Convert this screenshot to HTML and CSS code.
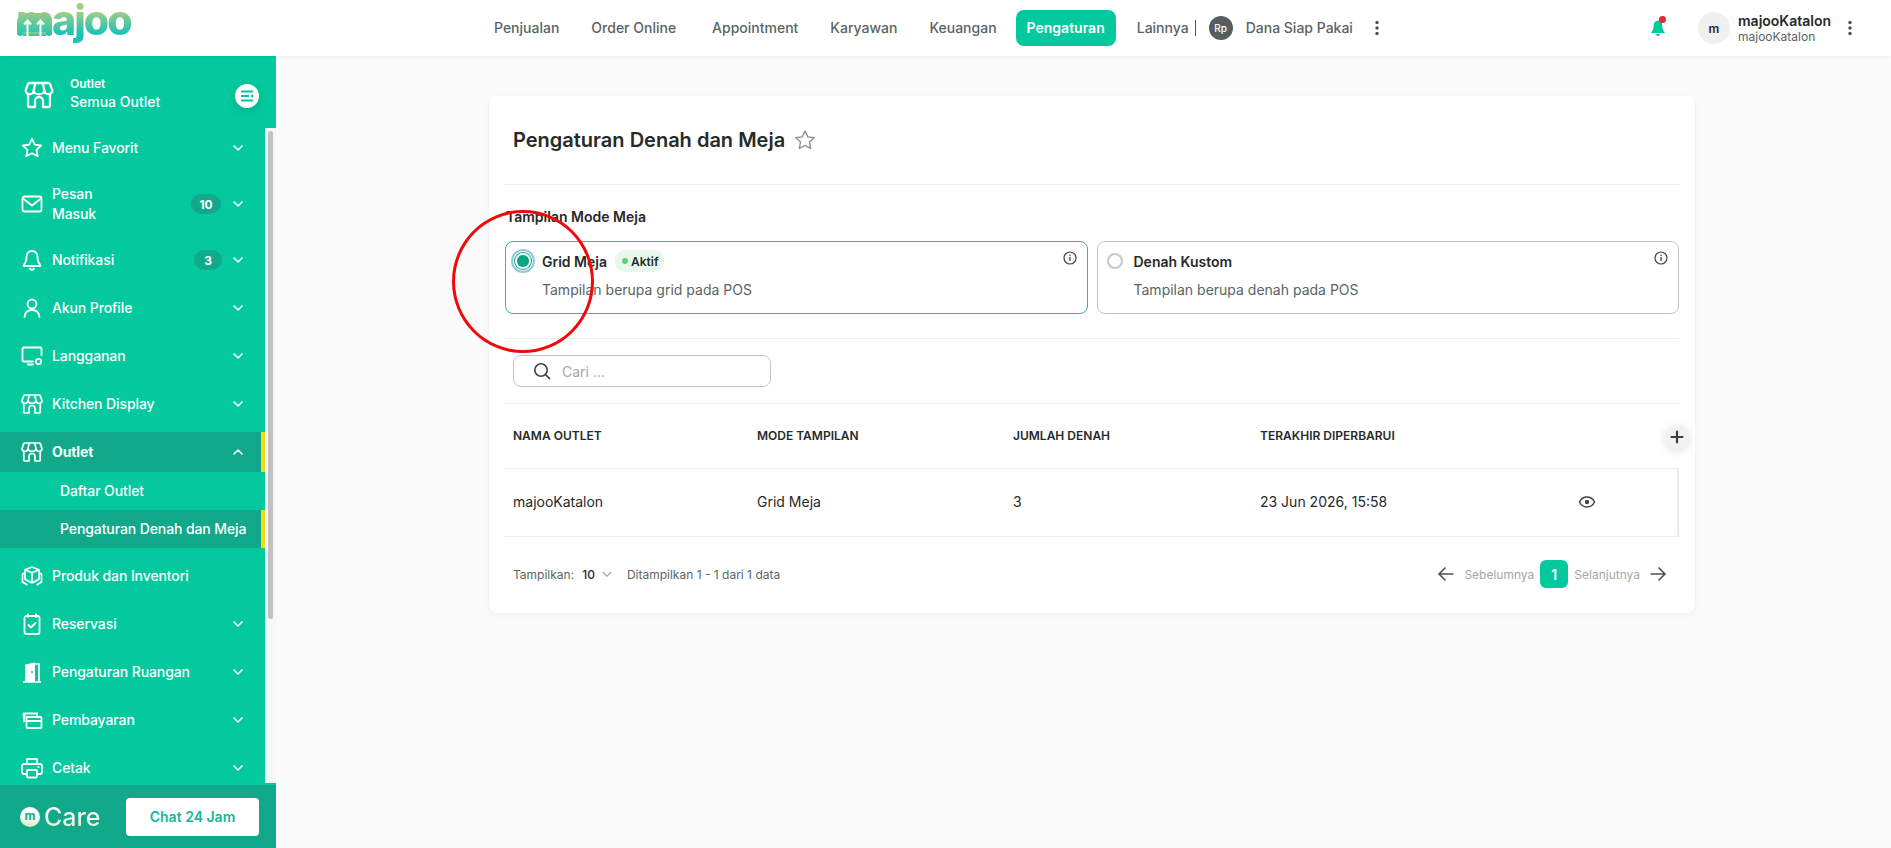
FILE: index.html
```html
<!DOCTYPE html>
<html lang="en">
<head>
    <meta charset="UTF-8">
    <meta name="viewport" content="width=device-width, initial-scale=1.0">
    <title>Pengaturan Denah dan Meja</title>
    <link rel="stylesheet" href="styles.css">
</head>
<body>
    <svg class="sprite" xmlns="http://www.w3.org/2000/svg">
        <symbol id="chev" viewBox="0 0 16 16"><path d="M4 6l4 4 4-4" fill="none" stroke="currentColor" stroke-width="1.6" stroke-linecap="round" stroke-linejoin="round"/></symbol>
        <symbol id="store" viewBox="0 0 24 24"><g fill="none" stroke="currentColor" stroke-width="1.7" stroke-linejoin="round" stroke-linecap="round"><path d="M5 3h14a1.4 1.4 0 0 1 1.3.9L22 8.6c0 1.6-1.3 2.7-2.9 2.7s-3-1.1-3.1-2.7c-.1 1.6-1.8 2.7-4 2.7s-3.900-1.100-4-2.700c-.1 1.600-1.500 2.700-3.100 2.700S2 10.200 2 8.600l1.700-4.700A1.400 1.400 0 0 1 5 3z"/><path d="M9.200 3.200L8 8.600M14.800 3.200L16 8.600"/><path d="M3.800 11.300V20a1 1 0 0 0 1 1H9v-4.500a3 3 0 0 1 6 0V21h4.200a1 1 0 0 0 1-1v-8.700"/></g></symbol>
        <symbol id="kebab" viewBox="0 0 16 16"><circle cx="8" cy="2.500" r="1.700" fill="currentColor"/><circle cx="8" cy="8" r="1.700" fill="currentColor"/><circle cx="8" cy="13.500" r="1.700" fill="currentColor"/></symbol>
        <symbol id="info" viewBox="0 0 16 16"><circle cx="8" cy="8" r="6" fill="none" stroke="currentColor" stroke-width="1.200"/><path d="M8 7.500v3" stroke="currentColor" stroke-width="1.300" stroke-linecap="round"/><circle cx="8" cy="5.300" r=".8" fill="currentColor"/></symbol>
    </svg>

    <header class="topbar">
        <div class="logo">
            <span class="logo-text">majoo</span>
            <svg class="logo-plate" viewBox="0 0 36 24" width="36" height="24">
                <defs><linearGradient id="plate" x1="0" y1="0" x2="0" y2="1"><stop offset="0" stop-color="#98cb88"/><stop offset="1" stop-color="#1fc4b4"/></linearGradient></defs>
                <path d="M1 21V10a9 9 0 0 1 9-9h17a9 9 0 0 1 9 9v11a3 3 0 0 1-6 0v-1H7v1a3 3 0 0 1-6 0z" fill="url(#plate)"/>
                <path d="M7 20h23v4H7z" fill="url(#plate)"/>
                <path d="M11.500 24V9M8 12.500l3.500-4 3.500 4M24.500 24V9M21 12.500l3.500-4 3.500 4" fill="none" stroke="#fff" stroke-width="2"/>
            </svg>
        </div>
        <nav class="topnav">
            <a class="topnav-item">Penjualan</a>
            <a class="topnav-item topnav-wide">Order Online</a>
            <a class="topnav-item">Appointment</a>
            <a class="topnav-item">Karyawan</a>
            <a class="topnav-item">Keuangan</a>
            <a class="topnav-item topnav-active">Pengaturan</a>
            <a class="topnav-item topnav-more">Lainnya</a>
            <span class="topnav-sep"></span>
            <span class="rp-badge">Rp</span>
            <a class="topnav-item topnav-dana">Dana Siap Pakai</a>
            <svg class="kebab" width="16" height="16"><use href="#kebab"/></svg>
        </nav>
        <div class="topbar-right">
            <span class="bell">
                <svg width="16" height="18" viewBox="0 0 16 18"><path d="M8 1.500c-2.800 0-4.300 2.200-4.300 4.800 0 3.400-.8 5.400-2.400 6.900-.3.300-.1.800.3.800h12.800c.4 0 .6-.5.300-.8-1.600-1.500-2.400-3.500-2.400-6.900C12.300 3.700 10.800 1.500 8 1.500zM6 15h4a2 2 0 0 1-4 0z" fill="#04c99e"/></svg>
                <i class="bell-dot"></i>
            </span>
            <span class="avatar">m</span>
            <div class="user">
                <div class="user-name">majooKatalon</div>
                <div class="user-sub">majooKatalon</div>
            </div>
            <svg class="kebab" width="16" height="16"><use href="#kebab"/></svg>
        </div>
    </header>

    <div class="layout">
        <aside class="sidebar">
            <div class="outlet-head">
                <svg class="outlet-icon" width="32" height="32"><use href="#store"/></svg>
                <div class="outlet-text">
                    <div class="outlet-label">Outlet</div>
                    <div class="outlet-name">Semua Outlet</div>
                </div>
                <span class="outlet-btn">
                    <svg width="16" height="16" viewBox="0 0 16 16"><path d="M2 3.500h12M2 8h8M2 12.500h12" stroke="#04c99e" stroke-width="2" fill="none"/><path d="M14 6v4l-2.500-2z" fill="#04c99e"/></svg>
                </span>
            </div>

            <div class="menu-wrap">
                <ul class="menu">
                    <li class="menu-item">
                        <svg class="menu-icon" viewBox="0 0 24 24"><path d="M12 2.800l2.800 5.900 6.400.8-4.700 4.400 1.200 6.400-5.700-3.100-5.700 3.100 1.200-6.400-4.700-4.400 6.400-.8z" fill="none" stroke="currentColor" stroke-width="1.800" stroke-linejoin="round"/></svg>
                        <span class="menu-label">Menu Favorit</span>
                        <svg class="menu-chev"><use href="#chev"/></svg>
                    </li>
                    <li class="menu-item menu-tall">
                        <svg class="menu-icon" viewBox="0 0 24 24"><rect x="2.500" y="4.500" width="19" height="15" rx="2" fill="none" stroke="currentColor" stroke-width="1.800"/><path d="M3 6.500l9 7 9-7" fill="none" stroke="currentColor" stroke-width="1.800"/></svg>
                        <span class="menu-label">Pesan<br>Masuk</span>
                        <span class="menu-badge">10</span>
                        <svg class="menu-chev"><use href="#chev"/></svg>
                    </li>
                    <li class="menu-item">
                        <svg class="menu-icon" viewBox="0 0 24 24"><path d="M12 3c-3.600 0-5.500 2.700-5.500 6 0 4-1 6.300-2.800 8.200-.3.300-.1.800.3.800h16c.4 0 .6-.5.300-.8C18.500 15.300 17.500 13 17.500 9c0-3.300-1.900-6-5.500-6zM10 20.500c.4.900 1.100 1.300 2 1.300s1.600-.4 2-1.300" fill="none" stroke="currentColor" stroke-width="1.800" stroke-linejoin="round" stroke-linecap="round"/></svg>
                        <span class="menu-label">Notifikasi</span>
                        <span class="menu-badge menu-badge-small">3</span>
                        <svg class="menu-chev"><use href="#chev"/></svg>
                    </li>
                    <li class="menu-item">
                        <svg class="menu-icon" viewBox="0 0 24 24"><circle cx="12" cy="8" r="4.500" fill="none" stroke="currentColor" stroke-width="1.800"/><path d="M4.500 21c.4-4.500 3.400-7 7.500-7s7.100 2.500 7.500 7" fill="none" stroke="currentColor" stroke-width="1.800" stroke-linecap="round"/></svg>
                        <span class="menu-label">Akun Profile</span>
                        <svg class="menu-chev"><use href="#chev"/></svg>
                    </li>
                    <li class="menu-item">
                        <svg class="menu-icon" viewBox="0 0 24 24"><path d="M13 17.500H4a1.500 1.500 0 0 1-1.500-1.500V5A1.500 1.500 0 0 1 4 3.500h16A1.500 1.500 0 0 1 21.500 5v6M8 20.500h5" fill="none" stroke="currentColor" stroke-width="1.800" stroke-linecap="round"/><circle cx="18.500" cy="17.500" r="2.600" fill="none" stroke="currentColor" stroke-width="1.800"/></svg>
                        <span class="menu-label">Langganan</span>
                        <svg class="menu-chev"><use href="#chev"/></svg>
                    </li>
                    <li class="menu-item">
                        <svg class="menu-icon"><use href="#store"/></svg>
                        <span class="menu-label">Kitchen Display</span>
                        <svg class="menu-chev"><use href="#chev"/></svg>
                    </li>
                    <li class="menu-item menu-current">
                        <svg class="menu-icon"><use href="#store"/></svg>
                        <span class="menu-label menu-label-bold">Outlet</span>
                        <svg class="menu-chev menu-chev-up"><use href="#chev"/></svg>
                    </li>
                    <li class="menu-sub">Daftar Outlet</li>
                    <li class="menu-sub menu-current">Pengaturan Denah dan Meja</li>
                    <li class="menu-item menu-after-sub">
                        <svg class="menu-icon" viewBox="0 0 24 24"><g fill="none" stroke="currentColor" stroke-width="1.700" stroke-linejoin="round"><path d="M12 3l7 2.800v9.400L12 19l-7-3.800V5.800z"/><path d="M5 5.800l7 3 7-3M12 8.800V19"/><path d="M5 9l-2.500 1v8l5 3M19 9l2.500 1v8l-5 3"/></g></svg>
                        <span class="menu-label">Produk dan Inventori</span>
                    </li>
                    <li class="menu-item">
                        <svg class="menu-icon" viewBox="0 0 24 24"><rect x="4.500" y="4" width="15" height="18" rx="2" fill="none" stroke="currentColor" stroke-width="1.800"/><path d="M8 2.500V5M16 2.500V5M8.500 13l2.500 2.500 4.500-4.500" fill="none" stroke="currentColor" stroke-width="1.800" stroke-linecap="round" stroke-linejoin="round"/></svg>
                        <span class="menu-label">Reservasi</span>
                        <svg class="menu-chev"><use href="#chev"/></svg>
                    </li>
                    <li class="menu-item">
                        <svg class="menu-icon" viewBox="0 0 24 24"><path d="M5 22V4.500L15 2.500V22z" fill="currentColor"/><path d="M15 4h4v17.500M3 22h18" fill="none" stroke="currentColor" stroke-width="1.700"/><circle cx="12" cy="12" r="1" fill="#04c99e"/></svg>
                        <span class="menu-label">Pengaturan Ruangan</span>
                        <svg class="menu-chev"><use href="#chev"/></svg>
                    </li>
                    <li class="menu-item">
                        <svg class="menu-icon" viewBox="0 0 24 24"><g fill="none" stroke="currentColor" stroke-width="1.800"><rect x="6.500" y="9" width="15" height="11" rx="1"/><path d="M6.500 13h15M4 14V5.500h13V9"/><path d="M2.500 5.500h3v5h-2.500z" fill="currentColor" stroke="none"/></g></svg>
                        <span class="menu-label">Pembayaran</span>
                        <svg class="menu-chev"><use href="#chev"/></svg>
                    </li>
                    <li class="menu-item">
                        <svg class="menu-icon" viewBox="0 0 24 24"><g fill="none" stroke="currentColor" stroke-width="1.800" stroke-linejoin="round"><path d="M7 8V3h10v5"/><path d="M7 18H4a2 2 0 0 1-2-2v-6a2 2 0 0 1 2-2h16a2 2 0 0 1 2 2v6a2 2 0 0 1-2 2h-3"/><rect x="7" y="14" width="10" height="7.500" rx="1"/></g><circle cx="18.500" cy="11" r="1" fill="currentColor"/></svg>
                        <span class="menu-label">Cetak</span>
                        <svg class="menu-chev"><use href="#chev"/></svg>
                    </li>
                </ul>
                <div class="scrollbar"><div class="scrollbar-thumb"></div></div>
            </div>

            <div class="care">
                <div class="care-logo">
                    <span class="care-mark">m</span>
                    <span class="care-text">Care</span>
                </div>
                <button class="care-btn">Chat 24 Jam</button>
            </div>
        </aside>

        <main class="content">
            <section class="card">
                <div class="card-head">
                    <h1 class="card-title">Pengaturan Denah dan Meja</h1>
                    <svg class="title-star" width="24" height="24" viewBox="0 0 24 24"><path d="M12 3l2.800 5.900 6.400.8-4.700 4.400 1.200 6.400-5.700-3.100-5.700 3.100 1.200-6.400-4.700-4.400 6.400-.8z" fill="none" stroke="#8b9291" stroke-width="1.400" stroke-linejoin="round"/></svg>
                </div>

                <div class="mode-label">Tampilan Mode Meja</div>
                <div class="mode-row">
                    <div class="mode-card mode-card-on">
                        <span class="radio radio-on"></span>
                        <div class="mode-body">
                            <div class="mode-title">Grid Meja <span class="tag"><i class="tag-dot"></i>Aktif</span></div>
                            <div class="mode-desc">Tampilan berupa grid pada POS</div>
                        </div>
                        <svg class="mode-info" width="16" height="16"><use href="#info"/></svg>
                    </div>
                    <div class="mode-card">
                        <span class="radio"></span>
                        <div class="mode-body">
                            <div class="mode-title">Denah Kustom</div>
                            <div class="mode-desc">Tampilan berupa denah pada POS</div>
                        </div>
                        <svg class="mode-info" width="16" height="16"><use href="#info"/></svg>
                    </div>
                </div>

                <div class="search-row">
                    <div class="search">
                        <svg width="20" height="20" viewBox="0 0 20 20"><circle cx="9" cy="9" r="6.200" fill="none" stroke="#3f4746" stroke-width="1.600"/><path d="M13.600 13.600l4 4" stroke="#3f4746" stroke-width="1.600" stroke-linecap="round"/></svg>
                        <span class="search-text">Cari ...</span>
                    </div>
                </div>

                <table class="table">
                    <thead>
                        <tr>
                            <th class="col-name">NAMA OUTLET</th>
                            <th class="col-mode">MODE TAMPILAN</th>
                            <th class="col-count">JUMLAH DENAH</th>
                            <th class="col-date">TERAKHIR DIPERBARUI</th>
                            <th class="col-action">
                                <span class="add-btn">
                                    <svg width="14" height="14" viewBox="0 0 14 14"><path d="M7 1.500v11M1.500 7h11" stroke="#3a4140" stroke-width="2.200" stroke-linecap="round"/></svg>
                                </span>
                            </th>
                        </tr>
                    </thead>
                    <tbody>
                        <tr>
                            <td>majooKatalon</td>
                            <td>Grid Meja</td>
                            <td>3</td>
                            <td>23 Jun 2026, 15:58</td>
                            <td class="cell-action">
                                <svg width="18" height="18" viewBox="0 0 18 18"><path d="M1.500 9C3 5.800 5.700 4 9 4s6 1.800 7.500 5c-1.500 3.200-4.200 5-7.500 5S3 12.200 1.500 9z" fill="none" stroke="#3f4746" stroke-width="1.500"/><circle cx="9" cy="9" r="2.200" fill="#3f4746"/></svg>
                            </td>
                        </tr>
                    </tbody>
                </table>

                <div class="table-foot">
                    <span class="foot-text">Tampilkan:</span>
                    <span class="foot-size">10</span>
                    <svg class="foot-chev" width="14" height="14" viewBox="0 0 16 16"><path d="M3 5.500l5 5 5-5" fill="none" stroke="#9aa1a0" stroke-width="1.300"/></svg>
                    <span class="foot-text">Ditampilkan 1 - 1 dari 1 data</span>
                    <div class="pager">
                        <svg class="pager-arrow pager-prev" width="18" height="18" viewBox="0 0 18 18"><path d="M16.500 9H2M8.500 2.500L2 9l6.500 6.500" fill="none" stroke="#4a5150" stroke-width="1.500"/></svg>
                        <span class="pager-text">Sebelumnya</span>
                        <span class="pager-num">1</span>
                        <span class="pager-text">Selanjutnya</span>
                        <svg class="pager-arrow pager-next" width="18" height="18" viewBox="0 0 18 18"><path d="M1.500 9H16M9.500 2.500L16 9l-6.500 6.500" fill="none" stroke="#4a5150" stroke-width="1.500"/></svg>
                    </div>
                </div>
            </section>
        </main>
    </div>

    <div class="annotation"></div>
</body>
</html>
```

FILE: styles.css
```css
:root {
    --green: #04c99e;
    --green-dark: #12a98a;
    --yellow: #f7dc11;
    --text: #272a2a;
    --text-soft: #5b6463;
    --line: #eeeeee;
}

* {
    box-sizing: border-box;
}

html, body {
    height: 100%;
}

body {
    margin: 0;
    font-family: Inter, "Noto Sans", sans-serif;
    font-size: 14px;
    color: var(--text);
    background-color: #fafafa;
    display: flex;
    flex-direction: column;
    height: 100vh;
    overflow: hidden;
}

.sprite {
    display: none;
}

/* top bar */
.topbar {
    flex: 0 0 56px;
    display: flex;
    align-items: center;
    background: #fff;
    box-shadow: 0 1px 4px rgba(0, 0, 0, 0.06);
    position: relative;
    z-index: 2;
}

.logo {
    width: 276px;
    height: 56px;
    padding-left: 16px;
    position: relative;
}

.logo-text {
    display: inline-block;
    font-size: 41px;
    font-weight: 800;
    line-height: 40px;
    padding-bottom: 8px;
    letter-spacing: -2px;
    background: linear-gradient(180deg, #a2cc84 25%, #18c4b8 70%);
    -webkit-background-clip: text;
    background-clip: text;
    color: transparent;
}

/* solid m with the two arrows cut out of it */
.logo-plate {
    position: absolute;
    left: 16px;
    top: 12px;
}

.topnav {
    display: flex;
    align-items: center;
    margin-left: 202px;
    color: var(--text-soft);
    font-weight: 500;
}

.topnav-item {
    padding: 0 16px;
    line-height: 36px;
    white-space: nowrap;
}

.topnav-wide {
    padding-right: 20px;
}

.topnav-active {
    background: var(--green);
    color: #fff;
    font-weight: 600;
    border-radius: 8px;
    padding: 0 11px;
    margin: 0 5px 0 3px;
}

.topnav-more {
    padding-right: 0;
}

.topnav-sep {
    width: 1px;
    height: 16px;
    background: #555;
    margin: 0 13px 0 6px;
}

.rp-badge {
    width: 24px;
    height: 24px;
    border-radius: 50%;
    background: #565e5d;
    color: #fff;
    font-size: 10px;
    display: flex;
    align-items: center;
    justify-content: center;
}

.topnav-dana {
    padding: 0 16px 0 13px;
}

.kebab {
    color: #4a5150;
    flex: none;
}

.topbar-right {
    margin-left: auto;
    display: flex;
    align-items: center;
    padding-right: 33px;
}

.bell {
    position: relative;
    display: flex;
    margin-right: 32px;
}

.bell-dot {
    position: absolute;
    top: -3px;
    right: 0;
    width: 7px;
    height: 7px;
    border-radius: 50%;
    background: #e8263c;
}

.avatar {
    width: 32px;
    height: 32px;
    border-radius: 50%;
    background: #f0f0f0;
    font-size: 12px;
    font-weight: 600;
    display: flex;
    align-items: center;
    justify-content: center;
    margin-right: 8px;
}

.user {
    margin-right: 8px;
    width: 96px;
}

.user-name {
    font-weight: 600;
    line-height: 17px;
    white-space: nowrap;
}

.user-sub {
    font-size: 12px;
    line-height: 16px;
    color: var(--text-soft);
}

/* sidebar */
.layout {
    flex: 1;
    display: flex;
    min-height: 0;
}

.sidebar {
    flex: 0 0 276px;
    min-width: 0;
    background: var(--green);
    color: #fff;
    display: flex;
    flex-direction: column;
    min-height: 0;
}

.outlet-head {
    flex: 0 0 72px;
    display: flex;
    align-items: center;
    padding: 6px 17px 0 23px;
}

.outlet-text {
    margin-left: 15px;
    flex: 1;
    margin-top: -2px;
}

.outlet-label {
    font-size: 12px;
    font-weight: 600;
    line-height: 16px;
}

.outlet-name {
    font-weight: 500;
    line-height: 20px;
}

.outlet-btn {
    width: 24px;
    height: 24px;
    border-radius: 50%;
    background: #fff;
    box-shadow: 0 3px 8px rgba(0, 0, 0, 0.15);
    display: flex;
    align-items: center;
    justify-content: center;
    margin-top: 1px;
}

.menu-wrap {
    flex: 1;
    min-height: 0;
    margin-bottom: 2px;
    display: flex;
}

.menu {
    flex: 1;
    min-width: 0;
    list-style: none;
    margin: 0;
    padding: 0;
    overflow: hidden;
    font-weight: 500;
    letter-spacing: -0.1px;
}

/* scrollbars are hidden in some browsers, so this one is plain divs */
.scrollbar {
    flex: 0 0 11px;
    background: #f7f7f7;
}

.scrollbar-thumb {
    height: 488px;
    margin: 3px 3px 0;
    border-radius: 3px;
    background: #c1c1c1;
}

.menu-item {
    height: 40px;
    margin-bottom: 8px;
    padding: 0 19px 0 20px;
    display: flex;
    align-items: center;
}

.menu-tall {
    height: 56px;
}

.menu-icon {
    flex: none;
    width: 24px;
    height: 24px;
    margin-right: 8px;
}

.menu-label {
    flex: 1;
    line-height: 20px;
    margin-bottom: 1px;
    white-space: nowrap;
}

.menu-label-bold {
    font-weight: 700;
}

.menu-badge {
    width: 30px;
    height: 20px;
    border-radius: 10px;
    background: var(--green-dark);
    font-size: 12px;
    font-weight: 700;
    display: flex;
    align-items: center;
    justify-content: center;
    margin-right: 9px;
}

.menu-badge-small {
    width: 28px;
    margin-right: 8px;
}

.menu-chev {
    flex: none;
    width: 16px;
    height: 16px;
}

.menu-chev-up {
    transform: rotate(180deg);
}

.menu-current {
    background: var(--green-dark);
    border-right: 4px solid var(--yellow);
    padding-right: 15px;
}

.menu-item.menu-current {
    margin-bottom: 0;
}

.menu-sub {
    height: 38px;
    line-height: 37px;
    padding-left: 60px;
    white-space: nowrap;
}

.menu-after-sub {
    margin-top: 8px;
}

.care {
    flex: 0 0 63px;
    background: var(--green-dark);
    display: flex;
    align-items: center;
    justify-content: space-between;
    padding: 0 17px 0 20px;
}

.care-logo {
    display: flex;
    align-items: center;
    gap: 4px;
    margin-top: 1px;
}

.care-mark {
    width: 20px;
    height: 20px;
    border-radius: 50%;
    background: linear-gradient(180deg, #fff 40%, #d4ecc7);
    color: var(--green-dark);
    font-size: 12px;
    font-weight: 700;
    line-height: 18px;
    text-align: center;
}

.care-text {
    font-size: 25px;
    font-weight: 500;
    line-height: 30px;
    background: linear-gradient(180deg, #fff 30%, #d4ecc7);
    -webkit-background-clip: text;
    background-clip: text;
    color: transparent;
}

.care-btn {
    width: 133px;
    height: 38px;
    border: none;
    border-radius: 4px;
    background: #fff;
    color: #12b898;
    font-family: inherit;
    font-size: 14px;
    font-weight: 600;
}

/* page content */
.content {
    flex: 1;
    min-width: 0;
    padding: 40px 196px 0 213px;
}

.card {
    height: 517px;
    background: #fff;
    border-radius: 8px;
    box-shadow: 0 2px 8px rgba(0, 0, 0, 0.04);
    padding: 0 16px;
}

.card-head {
    height: 89px;
    display: flex;
    align-items: center;
    padding-left: 8px;
    border-bottom: 1px solid var(--line);
}

.card-title {
    margin: 0;
    font-size: 20px;
    font-weight: 600;
    line-height: 28px;
}

.title-star {
    margin-left: 8px;
}

.mode-label {
    margin-top: 24px;
    font-weight: 600;
    line-height: 16px;
    margin-left: 1px;
}

.mode-row {
    display: flex;
    gap: 9px;
    margin-top: 16px;
    padding-bottom: 24px;
    border-bottom: 1px solid var(--line);
}

.mode-card {
    flex: 1;
    height: 73px;
    display: flex;
    border: 1px solid #c4c4c4;
    border-radius: 8px;
    padding: 9px 9px 0 9px;
}

.mode-card-on {
    border-color: #25bd9c;
}

.radio {
    flex: none;
    width: 16px;
    height: 16px;
    margin: 2px 7px 0 0;
    border: 2px solid #c6c6c6;
    border-radius: 50%;
}

.radio-on {
    width: 14px;
    height: 14px;
    margin: 3px 8px 0 1px;
    border: none;
    background: #0aa582;
    box-shadow: 0 0 0 1px #fff, 0 0 0 2px #0aa582, 0 0 0 3px #fff, 0 0 0 5px #8cc8dc;
    background-clip: content-box;
    padding: 1px;
}

.mode-body {
    flex: 1;
    padding-left: 4px;
}

.mode-title {
    display: flex;
    align-items: center;
    gap: 8px;
    height: 20px;
    font-weight: 600;
    white-space: nowrap;
}

.tag {
    display: inline-flex;
    align-items: center;
    height: 22px;
    padding: 0 5px 0 7px;
    border-radius: 10px;
    background: #e9f8ec;
    font-size: 12px;
}

.tag-dot {
    width: 6px;
    height: 6px;
    border-radius: 50%;
    background: #56d672;
    margin-right: 3px;
}

.mode-desc {
    margin-top: 9px;
    line-height: 20px;
    color: var(--text-soft);
}

.mode-info {
    flex: none;
    color: #3f4746;
    margin-top: -1px;
}

.search-row {
    padding: 16px 0 16px 8px;
    border-bottom: 1px solid var(--line);
}

.search {
    width: 258px;
    height: 32px;
    display: flex;
    align-items: center;
    padding-left: 18px;
    border: 1px solid #c4c4c4;
    border-radius: 8px;
}

.search-text {
    margin-left: 10px;
    color: #a4a9a8;
}

.table {
    width: 100%;
    border-collapse: separate;
    border-spacing: 0;
    table-layout: fixed;
}

.table th {
    height: 65px;
    padding: 0 0 2px 8px;
    text-align: left;
    font-size: 12px;
    font-weight: 600;
    border-bottom: 1px solid var(--line);
}

.table td {
    height: 68px;
    padding: 0 0 2px 8px;
    border-bottom: 1px solid var(--line);
}

.col-name {
    width: 244px;
}

.col-mode {
    width: 256px;
}

.col-count {
    width: 247px;
}

.col-date {
    width: 317px;
}

.table .col-action {
    padding: 0;
}

.add-btn {
    width: 24px;
    height: 24px;
    margin-left: 96px;
    margin-top: 2px;
    border-radius: 50%;
    background: #f2f2f2;
    box-shadow: 0 2px 10px rgba(0, 0, 0, 0.12);
    display: flex;
    align-items: center;
    justify-content: center;
}

.table .cell-action {
    padding-left: 9px;
    box-shadow: inset -3px 0 3px -2px rgba(0, 0, 0, 0.14);
}

.cell-action svg {
    display: block;
}

.table-foot {
    height: 76px;
    display: flex;
    align-items: center;
    padding: 0 10px 2px 8px;
    font-size: 12px;
}

.foot-text {
    color: var(--text-soft);
}

.foot-size {
    margin-left: 8px;
    font-weight: 500;
}

.foot-chev {
    margin: 0 13px 0 5px;
}

.pager {
    margin-left: auto;
    display: flex;
    align-items: center;
    gap: 6px;
}

.pager-text {
    color: #a4a9a8;
}

.pager-prev {
    margin: 0 3px 0 2px;
}

.pager-next {
    margin: 0 2px 0 3px;
}

.pager-num {
    width: 28px;
    height: 28px;
    border-radius: 6px;
    background: var(--green);
    color: #fff;
    font-size: 14px;
    font-weight: 600;
    display: flex;
    align-items: center;
    justify-content: center;
}

/* red circle someone drew on the screenshot */
.annotation {
    position: absolute;
    left: 452px;
    top: 210px;
    width: 142px;
    height: 143px;
    border: 3.500px solid #ee0a0a;
    border-radius: 50%;
    z-index: 3;
}
```
